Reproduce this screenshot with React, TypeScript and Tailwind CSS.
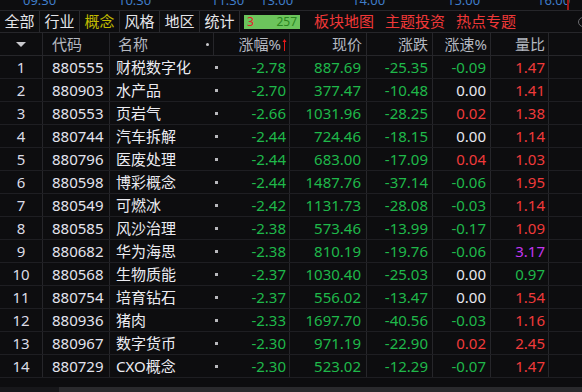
type Row = [string, string, string, string, string, string, string, string];

const rows: Row[] = [
  ['1', '880555', '财税数字化', '-2.78', '887.69', '-25.35', '-0.09', '1.47'],
  ['2', '880903', '水产品', '-2.70', '377.47', '-10.48', '0.00', '1.41'],
  ['3', '880553', '页岩气', '-2.66', '1031.96', '-28.25', '0.02', '1.38'],
  ['4', '880744', '汽车拆解', '-2.44', '724.46', '-18.15', '0.00', '1.14'],
  ['5', '880796', '医废处理', '-2.44', '683.00', '-17.09', '0.04', '1.03'],
  ['6', '880598', '博彩概念', '-2.44', '1487.76', '-37.14', '-0.06', '1.95'],
  ['7', '880549', '可燃冰', '-2.42', '1131.73', '-28.08', '-0.03', '1.14'],
  ['8', '880585', '风沙治理', '-2.38', '573.46', '-13.99', '-0.17', '1.09'],
  ['9', '880682', '华为海思', '-2.38', '810.19', '-19.76', '-0.06', '3.17'],
  ['10', '880568', '生物质能', '-2.37', '1030.40', '-25.03', '0.00', '0.97'],
  ['11', '880754', '培育钻石', '-2.37', '556.02', '-13.47', '0.00', '1.54'],
  ['12', '880936', '猪肉', '-2.33', '1697.70', '-40.56', '-0.03', '1.16'],
  ['13', '880967', '数字货币', '-2.30', '971.19', '-22.90', '0.02', '2.45'],
  ['14', '880729', 'CXO概念', '-2.30', '523.02', '-12.29', '-0.07', '1.47'],
];

const times = [
  ['09:30', 'left-[23px]'],
  ['10:30', 'left-[118px]'],
  ['11:30', 'left-[211px]'],
  ['13:00', 'left-[260px]'],
  ['14:00', 'left-[352px]'],
  ['15:00', 'left-[447px]'],
  ['16:00', 'left-[537px]'],
];

const tabs = ['全部', '行业', '概念', '风格', '地区', '统计'];

const GREEN = 'text-[#1fb84a]';
const RED = 'text-[#f03a3a]';
const WHITE = 'text-[#e8e8f0]';

function signColor(v: string) {
  const n = parseFloat(v);
  if (n < 0) return GREEN;
  if (n > 0) return RED;
  return WHITE;
}

function ratioColor(v: string) {
  const n = parseFloat(v);
  if (n >= 3) return 'text-[#c236f0]';
  if (n >= 1) return RED;
  return GREEN;
}

const grid = 'grid grid-cols-[43px_67px_104px_76px_77px_66px_58px_58px_33px]';

export default function App() {
  return (
    <div
      className="w-[582px] h-[392px] overflow-hidden bg-[#0d0d0f] text-[15px] flex flex-col"
      style={{ fontFamily: '"Noto Sans", "Noto Sans CJK SC", sans-serif' }}
    >
      {/* time axis, clipped */}
      <div className="relative h-[11px] shrink-0 overflow-hidden border-b border-[#26262a]">
        {times.map(([t, pos]) => (
          <span key={t} className={`absolute ${pos} top-[-7px] text-[13px] leading-[14px] text-[#3f7cc8]`}>
            {t}
          </span>
        ))}
        <div className="absolute left-[567px] top-0 w-[2px] h-[10px] bg-[#a01818]" />
      </div>

      {/* tab bar */}
      <div className="h-[22px] shrink-0 flex items-center border-b border-[#26262a]">
        {tabs.map((t) => (
          <div
            key={t}
            className={`w-[40px] h-full flex items-center justify-center border-r border-[#2a2a2e] ${
              t === '概念' ? 'text-[#c2bc00]' : 'text-[#e6e6ea]'
            }`}
          >
            {t}
          </div>
        ))}
        <div className="ml-[4px] w-[56px] h-[14px] bg-[#6cc45c] flex items-center justify-between px-[3px] text-[12px] leading-none">
          <span className="text-[#e0202a]">3</span>
          <span className="text-[#2a8420]">257</span>
        </div>
        <div className="ml-[14px] flex gap-[11px] text-[#f03838]">
          <span>板块地图</span>
          <span>主题投资</span>
          <span>热点专题</span>
        </div>
        <div className="ml-auto mr-[-6px] w-[10px] h-[10px] rounded-full border border-[#6a6a6e]" />
      </div>

      {/* header */}
      <div className={`${grid} h-[23px] shrink-0 border-b border-[#26262a] text-[#b4b8c0] leading-[22px]`}>
        <div className="border-r border-[#26262a] flex items-center justify-center">
          <span className="w-0 h-0 border-l-[5px] border-r-[5px] border-t-[5px] border-l-transparent border-r-transparent border-t-[#c8c8cc]" />
        </div>
        <div className="border-r border-[#26262a] pl-[9px]">代码</div>
        <div className="border-r border-[#26262a] pl-[8px] flex items-center justify-between pr-[4px]">
          <span>名称</span>
          <span className="w-[3px] h-[3px] rounded-full bg-[#c8c8cc]" />
        </div>
        <div className="border-r border-[#26262a] flex items-center justify-end pr-[2px]">
          <span>涨幅%</span>
          <svg width="5" height="13" viewBox="0 0 5 13" className="ml-[1px]">
            <path d="M2.5 1 L0.5 4 H2 V13 H3 V4 H4.5 Z" fill="#e81818" />
          </svg>
        </div>
        <div className="border-r border-[#26262a] text-right pr-[4px]">现价</div>
        <div className="border-r border-[#26262a] text-right pr-[4px]">涨跌</div>
        <div className="border-r border-[#26262a] text-right pr-[3px]">涨速%</div>
        <div className="border-r border-[#26262a] text-right pr-[3px]">量比</div>
        <div />
      </div>

      {/* rows */}
      {rows.map((r) => (
        <div key={r[0]} className={`${grid} h-[23px] shrink-0 border-b border-[#1e1e22] leading-[22px]`}>
          <div className="border-r border-[#26262a] text-center text-[#dcdce6]">{r[0]}</div>
          <div className="border-r border-[#26262a] pl-[9px] text-[#e4e4ee]">{r[1]}</div>
          <div className="pl-[6px] text-[#ececf2] whitespace-nowrap">{r[2]}</div>
          <div className="border-r border-[#26262a] flex items-center justify-between pl-[1px] pr-[3px]">
            <span className="w-[3px] h-[3px] bg-[#b8b8bc]" />
            <span className={GREEN}>{r[3]}</span>
          </div>
          <div className={`border-r border-[#26262a] text-right pr-[5px] ${GREEN}`}>{r[4]}</div>
          <div className={`border-r border-[#26262a] text-right pr-[4px] ${GREEN}`}>{r[5]}</div>
          <div className={`border-r border-[#26262a] text-right pr-[4px] ${signColor(r[6])}`}>{r[6]}</div>
          <div className={`border-r border-[#26262a] text-right pr-[3px] ${ratioColor(r[7])}`}>{r[7]}</div>
          <div />
        </div>
      ))}

      {/* horizontal scrollbar */}
      <div className="mt-auto h-[5px] shrink-0 flex">
        <div className="w-[59px] bg-[#17171a]" />
        <div className="flex-1 bg-[#2a2a2d]" />
      </div>
    </div>
  );
}
